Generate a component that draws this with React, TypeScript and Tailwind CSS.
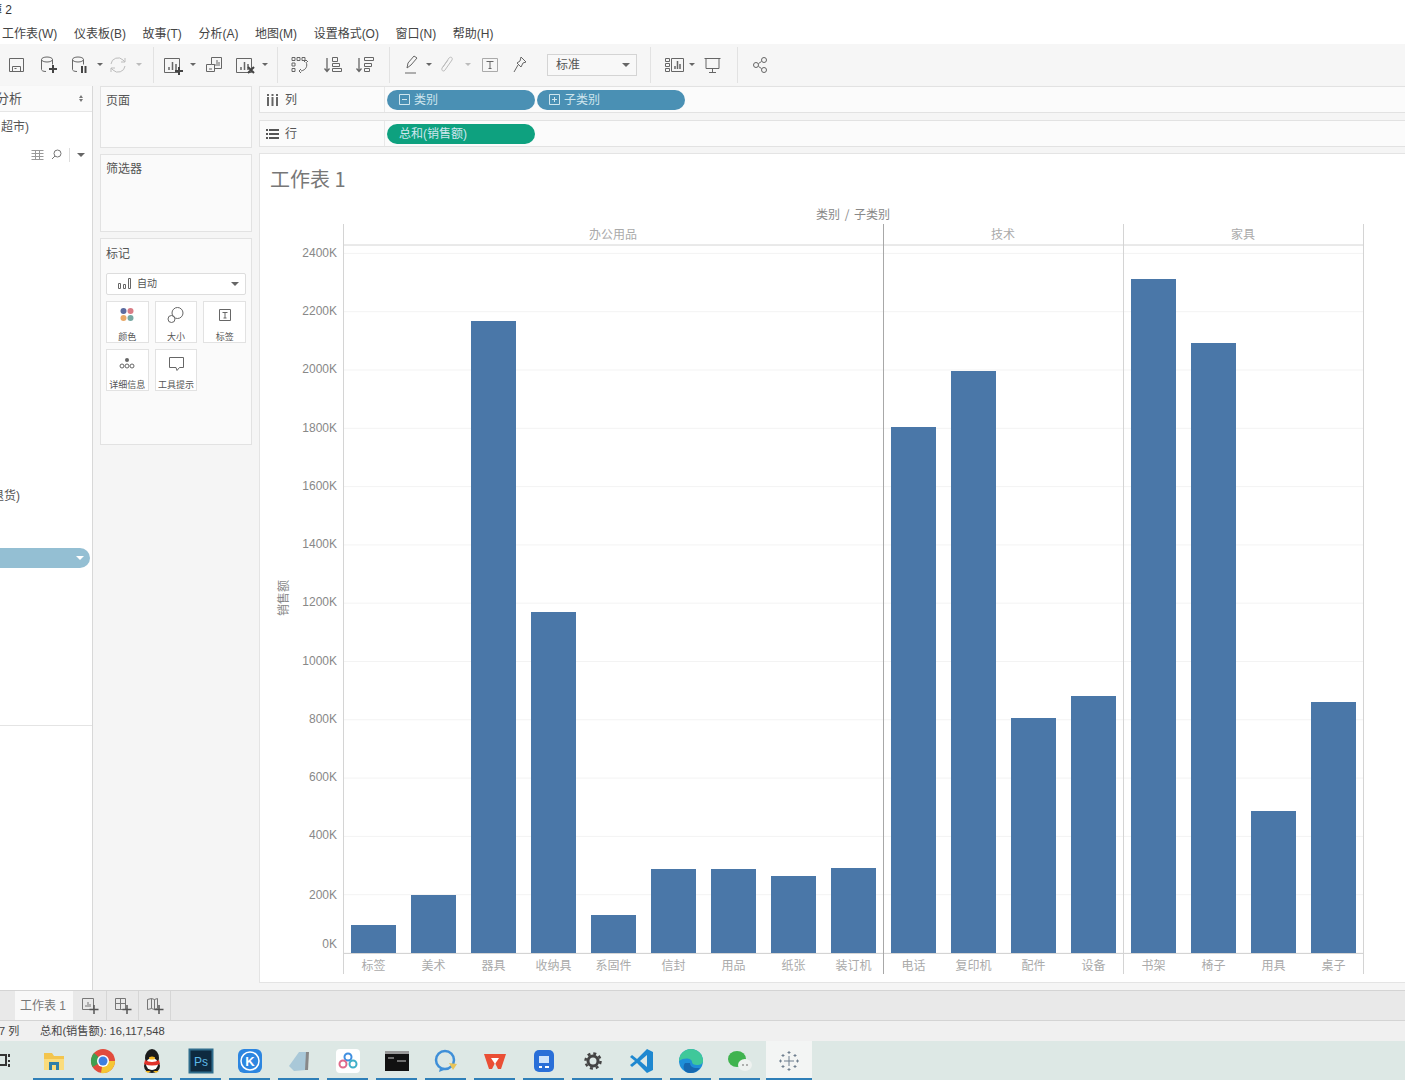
const groups = [
  { name: "办公用品", center: 613 },
  { name: "技术", center: 1003 },
  { name: "家具", center: 1243 },
];

const bars = [
  { name: "标签", x: 351, top: 925 },
  { name: "美术", x: 411, top: 895 },
  { name: "器具", x: 471, top: 321 },
  { name: "收纳具", x: 531, top: 612 },
  { name: "系固件", x: 591, top: 915 },
  { name: "信封", x: 651, top: 869 },
  { name: "用品", x: 711, top: 869 },
  { name: "纸张", x: 771, top: 876 },
  { name: "装订机", x: 831, top: 868 },
  { name: "电话", x: 891, top: 427 },
  { name: "复印机", x: 951, top: 371 },
  { name: "配件", x: 1011, top: 718 },
  { name: "设备", x: 1071, top: 696 },
  { name: "书架", x: 1131, top: 279 },
  { name: "椅子", x: 1191, top: 343 },
  { name: "用具", x: 1251, top: 811 },
  { name: "桌子", x: 1311, top: 702 },
];

const ticks = [
  { label: "2400K", y: 253 },
  { label: "2200K", y: 311 },
  { label: "2000K", y: 369 },
  { label: "1800K", y: 428 },
  { label: "1600K", y: 486 },
  { label: "1400K", y: 544 },
  { label: "1200K", y: 602 },
  { label: "1000K", y: 661 },
  { label: "800K", y: 719 },
  { label: "600K", y: 777 },
  { label: "400K", y: 835 },
  { label: "200K", y: 895 },
  { label: "0K", y: 944 },
];

const menus = [
  "工作表(W)",
  "仪表板(B)",
  "故事(T)",
  "分析(A)",
  "地图(M)",
  "设置格式(O)",
  "窗口(N)",
  "帮助(H)",
];

const Caret = ({ className = "" }: { className?: string }) => (
  <span
    className={`h-0 w-0 border-x-[3px] border-t-[3px] border-x-transparent border-t-[#666] ${className}`}
  />
);

const Sep = ({ className = "" }: { className?: string }) => (
  <span className={`h-[36px] w-px bg-[#e2e2e2] ${className}`} />
);

const Tool = ({
  w = 20,
  children,
  className = "",
}: {
  w?: number;
  children: React.ReactNode;
  className?: string;
}) => (
  <svg
    width={w}
    height="20"
    viewBox={`0 0 ${w} 20`}
    fill="none"
    stroke="#666"
    strokeWidth="1"
    className={`shrink-0 ${className}`}
  >
    {children}
  </svg>
);

const Toolbar = () => (
  <div className="flex h-[41px] items-center bg-[#f6f6f6] text-xs text-[#555]">
    <Tool className="ml-[7px]">
      <path d="M2.5 3.5h14v13h-14zM5.5 16.5v-5h8v5M7.5 13.5h2" />
    </Tool>
    <Tool className="ml-[12px]">
      <ellipse cx="8" cy="4.5" rx="5.5" ry="2.5" />
      <path d="M2.5 4.5v10c0 1 1.5 2 4.5 2M13.5 4.5v5" />
      <path d="M14 10v8M10 14h8" stroke="#444" strokeWidth="2" />
    </Tool>
    <Tool className="ml-[11px]">
      <ellipse cx="8" cy="4.5" rx="5.5" ry="2.5" />
      <path d="M2.5 4.5v10c0 1 1.5 2 4.5 2M13.5 4.5v5" />
      <path d="M12 11v7M15.5 11v7" stroke="#444" strokeWidth="2" />
    </Tool>
    <Caret className="ml-[7px]" />
    <Tool className="ml-[5px] opacity-40">
      <path d="M3 9a7 7 0 0 1 12-4l2 2M17 11a7 7 0 0 1-12 4l-2-2" />
      <path d="M17 3v4h-4M3 17v-4h4" />
    </Tool>
    <Caret className="ml-[8px] opacity-40" />
    <Sep className="ml-[11px]" />
    <Tool className="ml-[8px]" w={22}>
      <path d="M2.5 3.5h15v14h-15z" />
      <path d="M7 15v-3M10.5 15V7M14 15v-6" strokeWidth="1.5" />
      <path d="M17 12v8M13 16h8" stroke="#444" strokeWidth="2" />
    </Tool>
    <Caret className="ml-[6px]" />
    <Tool className="ml-[8px]">
      <path d="M7.5 9.5V2.5h10v11h-7M7.5 9.5h-5v7h8v-7z" />
      <path d="M11 11V9M13 11V5M15 11V7M5 14h3" />
    </Tool>
    <Tool className="ml-[10px]" w={22}>
      <path d="M2.5 3.5h15v14h-15z" />
      <path d="M7 15v-3M10.5 15V7M14 15v-6" strokeWidth="1.5" />
      <path d="M14 12l6 6M20 12l-6 6" stroke="#444" strokeWidth="2" />
    </Tool>
    <Caret className="ml-[6px]" />
    <Sep className="ml-[9px]" />
    <Tool className="ml-[12px]">
      <path d="M2 2.5h3v3H2zM7 2.5h3v3H7zM12 2.5h3v3h-3zM2 8h3v3H2zM2 13.5h3v3H2z" />
      <path d="M16 7c2 4 0 8-5 9M11 14l-2 2 2 2M14 7l2-2 2 2" />
    </Tool>
    <Tool className="ml-[13px]">
      <path d="M4 3v13M1.5 13.5 4 16.5l2.5-3" strokeWidth="1.3" />
      <path d="M9.5 2.5h5v4h-5zM9.5 8.5h7v3h-7zM9.5 13.5h9v3h-9z" />
    </Tool>
    <Tool className="ml-[12px]">
      <path d="M4 3v13M1.5 13.5 4 16.5l2.5-3" strokeWidth="1.3" />
      <path d="M9.5 2.5h9v3h-9zM9.5 8.5h7v3h-7zM9.5 13.5h5v3h-5z" />
    </Tool>
    <Sep className="ml-[14px]" />
    <Tool className="ml-[13px]" w={16}>
      <path d="M4 13 5 8l6-7 3 2-6 7zM2 18h11" />
    </Tool>
    <Caret className="ml-[7px]" />
    <Tool className="ml-[7px] opacity-40" w={16}>
      <path d="M4 12 10 3c2-2 4 0 3 2l-7 10c-1 2-4 1-3-2l6-8" />
    </Tool>
    <Caret className="ml-[10px] opacity-40" />
    <Tool className="ml-[10px]" w={18}>
      <path d="M1.5 3.5h15v13h-15z" stroke="#aaa" />
      <path d="M5.5 6.5h7M9 6.5v7M7.5 13.5h3" />
    </Tool>
    <Tool className="ml-[13px]" w={16}>
      <path d="M9 2l5 5-3 1-2 4-4-4 3-2zM6 10l-4 7" />
    </Tool>
    <div className="ml-[19px] flex h-[22px] w-[90px] items-center justify-between border border-[#d4d4d4] bg-[#f8f8f8] pl-2 pr-[6px]">
      <span>标准</span>
      <Caret className="border-x-[4px] border-t-[4px]" />
    </div>
    <Sep className="ml-[13px]" />
    <Tool className="ml-[13px]" w={21}>
      <path d="M1.5 3.5h4v3h-4zM1.5 8.5h4v3h-4zM1.5 13.5h4v3h-4zM7.5 3.5h12v13h-12z" />
      <path d="M11 14v-3M13.5 14V6M16 14V9" strokeWidth="1.5" />
    </Tool>
    <Caret className="ml-[4px]" />
    <Tool className="ml-[8px]">
      <path d="M1.5 3.5h16M3 3.5v10h13v-10M9.5 13.5v4M6 17.5h7" />
    </Tool>
    <Sep className="ml-[14px]" />
    <Tool className="ml-[14px]" w={18}>
      <circle cx="4" cy="10" r="2.5" />
      <circle cx="12" cy="5" r="2.5" />
      <circle cx="12" cy="15" r="2.5" />
      <path d="M6.5 8.5 9.5 6.5M6.5 11.5l3 2" />
    </Tool>
  </div>
);

const Sidebar = () => (
  <aside className="flex w-[93px] shrink-0 flex-col border-r border-[#d8d8d8] bg-white text-xs text-[#555]">
    <div className="flex h-[26px] items-center justify-between border-b border-[#e6e6e6] bg-[#fafafa] pr-[9px]">
      <span className="-ml-[4px] text-[13px]">分析</span>
      <span className="flex flex-col gap-px">
        <span className="h-0 w-0 border-x-[2px] border-b-[3px] border-x-transparent border-b-[#777]" />
        <span className="h-0 w-0 border-x-[2px] border-t-[3px] border-x-transparent border-t-[#777]" />
      </span>
    </div>
    <div className="flex h-[29px] items-center">
      <span className="ml-px">超市)</span>
    </div>
    <div className="flex h-[27px] items-center justify-end gap-[7px] pr-[7px]">
      <svg width="13" height="11" viewBox="0 0 13 11" stroke="#999" fill="none">
        <path d="M.5 1.5h12M.5 4.5h12M.5 7.5h12M.5 10.5h12M4.5 1v10M8.5 1v10" />
      </svg>
      <svg width="11" height="11" viewBox="0 0 11 11" stroke="#777" fill="none">
        <circle cx="6.5" cy="4.5" r="3.5" />
        <path d="M4 7 1 10" />
      </svg>
      <span className="h-[14px] w-px bg-[#ddd]" />
      <Caret className="border-x-[4px] border-t-[4px]" />
    </div>
    <div className="mt-[320px] h-[17px] leading-[17px]">
      <span className="-ml-[8px] inline-block">退货)</span>
    </div>
    <div className="mt-[43px] flex h-[20px] w-[90px] items-center justify-end rounded-r-full bg-[#94bfd3] pr-[6px]">
      <Caret className="border-x-[4px] border-t-[4px] border-t-white" />
    </div>
    <div className="mt-[157px] h-px bg-[#e4e4e4]" />
  </aside>
);

const MarkButton = ({
  label,
  children,
}: {
  label: string;
  children: React.ReactNode;
}) => (
  <div className="flex h-[42px] flex-col items-center justify-between border border-[#e2e2e2] bg-white pb-0 pt-[4px] text-[9px] leading-none text-[#555]">
    <svg width="20" height="20" viewBox="0 0 20 20" fill="none" stroke="#666">
      {children}
    </svg>
    <span className="whitespace-nowrap">{label}</span>
  </div>
);

const Cards = () => (
  <div className="flex w-[166px] shrink-0 flex-col gap-[6px] pl-[7px] pr-[7px] text-xs text-[#555]">
    <section className="h-[62px] border border-[#e2e2e2] bg-[#fafafa] pl-[5px] pt-[6px]">
      页面
    </section>
    <section className="h-[78px] border border-[#e2e2e2] bg-[#fafafa] pl-[5px] pt-[6px]">
      筛选器
    </section>
    <section className="flex h-[207px] flex-col border border-[#e2e2e2] bg-[#fafafa] px-[5px] pt-[7px]">
      <span>标记</span>
      <div className="mt-[11px] flex h-[22px] items-center justify-between rounded-[2px] border border-[#ddd] bg-white pl-[10px] pr-[6px] text-[10px]">
        <span className="flex items-center gap-[6px]">
          <svg width="14" height="11" viewBox="0 0 14 11" fill="none" stroke="#666">
            <path d="M1.5 5.5h2v5h-2zM6.5 6.5h2v4h-2zM11.5 .5h2v10h-2z" />
          </svg>
          自动
        </span>
        <Caret className="border-x-[4px] border-t-[4px]" />
      </div>
      <div className="mt-[6px] grid grid-cols-3 gap-[6px]">
        <MarkButton label="颜色">
          <circle cx="6.5" cy="5" r="3" fill="#5b6ca0" stroke="none" />
          <circle cx="13.5" cy="5" r="3" fill="#d97c85" stroke="none" />
          <circle cx="6.5" cy="12" r="3" fill="#e8a868" stroke="none" />
          <circle cx="13.5" cy="12" r="3" fill="#76a8a2" stroke="none" />
        </MarkButton>
        <MarkButton label="大小">
          <circle cx="11.5" cy="7" r="5.5" />
          <circle cx="5.5" cy="13" r="3.5" />
        </MarkButton>
        <MarkButton label="标签">
          <path d="M4.5 3.5h11v11h-11z" />
          <path d="M7.5 6.5h5M10 6.5v5.5M8.5 12h3" />
        </MarkButton>
        <MarkButton label="详细信息">
          <circle cx="10" cy="6" r="2" fill="#666" stroke="none" />
          <circle cx="5" cy="12" r="2" />
          <circle cx="10" cy="12" r="2" />
          <circle cx="15" cy="12" r="2" />
        </MarkButton>
        <MarkButton label="工具提示">
          <path d="M3.5 3.5h14v10h-4l-2.5 3-1-3h-6.5z" />
        </MarkButton>
      </div>
    </section>
  </div>
);

const Pill = ({
  label,
  color,
  box,
}: {
  label: string;
  color: string;
  box?: "minus" | "plus";
}) => (
  <span
    className={`flex h-[20px] w-[148px] items-center gap-[4px] rounded-full pl-[12px] text-xs text-[#cfe6ee] ${color}`}
  >
    {box && (
      <svg width="11" height="11" viewBox="0 0 11 11" fill="none" stroke="#cfe6ee">
        <path d={box === "minus" ? "M.5 .5h10v10H.5zM3 5.5h5" : "M.5 .5h10v10H.5zM3 5.5h5M5.5 3v5"} />
      </svg>
    )}
    {label}
  </span>
);

const Shelf = ({
  label,
  icon,
  children,
  className = "",
}: {
  label: string;
  icon: React.ReactNode;
  children: React.ReactNode;
  className?: string;
}) => (
  <div className={`flex h-[27px] border border-r-0 border-[#e2e2e2] bg-[#fbfbfb] ${className}`}>
    <div className="flex w-[125px] shrink-0 items-center gap-[6px] border-r border-[#e8e8e8] pl-[6px] text-xs text-[#555]">
      {icon}
      {label}
    </div>
    <div className="flex items-center gap-[2px] pl-[2px]">{children}</div>
  </div>
);

const Chart = () => (
  <svg
    width="1146"
    height="828"
    viewBox="260 154 1146 828"
    className="block"
    fontFamily="'Noto Sans CJK SC', sans-serif"
  >
    {ticks.map((tick, i) => (
      <line
        key={tick.label}
        x1="344"
        x2="1363"
        y1={953 - (12 - i) * 58.3}
        y2={953 - (12 - i) * 58.3}
        stroke="#f3f3f3"
      />
    ))}
    {bars.map((bar) => (
      <rect
        key={bar.name}
        x={bar.x}
        y={bar.top}
        width="45"
        height={953 - bar.top}
        fill="#4a77a8"
      />
    ))}
    <path d="M343.5 224v750M1123.5 224v750M1363.5 224v750M343 245h1021M343 953.5h1021" stroke="#d4d4d4" fill="none" />
    <path d="M883.500 224v750" stroke="#a8a8a8" />
    <text x="853" y="219" textAnchor="middle" fontSize="12" fill="#888" wordSpacing="2">
      类别 / 子类别
    </text>
    {groups.map((group) => (
      <text key={group.name} x={group.center} y="239" textAnchor="middle" fontSize="12" fill="#aaa">
        {group.name}
      </text>
    ))}
    {ticks.map((tick) => (
      <text key={tick.label} x="337" y={tick.y + 4} textAnchor="end" fontSize="12" fill="#888" fontFamily="'Liberation Sans', sans-serif">
        {tick.label}
      </text>
    ))}
    {bars.map((bar) => (
      <text key={bar.name} x={bar.x + 22.5} y="970" textAnchor="middle" fontSize="12" fill="#aaa">
        {bar.name}
      </text>
    ))}
    <text
      transform="translate(288 598) rotate(-90)"
      textAnchor="middle"
      fontSize="12"
      fill="#888"
    >
      销售额
    </text>
  </svg>
);

const SheetAdd = ({ d }: { d: string }) => (
  <svg width="18" height="18" viewBox="0 0 18 18" fill="none" stroke="#777">
    <path d={d} />
    <path d="M13 8v9M8.5 12.5h9" stroke="#555" strokeWidth="1.5" />
  </svg>
);

const TabBar = () => (
  <div className="flex h-[31px] border-y border-[#d4d4d4] bg-[#e9e9e9] text-xs">
    <div className="ml-[15px] flex w-[58px] items-center bg-[#f8f8f8] pl-[5px] text-[#777]">
      工作表 1
    </div>
    <div className="flex w-[34px] items-center justify-center border-r border-[#d6d6d6]">
      <SheetAdd d="M1.5 1.5h11v11h-11zM5 10V8M7 10V5M9 10V7" />
    </div>
    <div className="flex w-[32px] items-center justify-center border-r border-[#d6d6d6]">
      <SheetAdd d="M1.5 1.5h10v11h-10zM1.5 6.5h10M6.5 1.5v11" />
    </div>
    <div className="flex w-[32px] items-center justify-center border-r border-[#d6d6d6]">
      <SheetAdd d="M1.5 2.5l4-1 3 1 3-1v10l-3 1-3-1-4 1zM5.5 1.5v10M8.5 2.5v10" />
    </div>
  </div>
);

const StatusBar = () => (
  <div className="flex h-[20px] items-center bg-[#f0f0f0] text-[11px] text-[#444]">
    <span className="-ml-px w-[41px] shrink-0">7 列</span>
    <span className="text-[11.2px]">总和(销售额): 16,117,548</span>
  </div>
);

const slots = [33, 82, 131, 180, 229, 278, 327, 376, 425, 474, 523, 572, 621, 670, 719];

const TaskIcon = ({ children }: { children: React.ReactNode }) => (
  <span className="flex w-[49px] justify-center">
    <svg width="26" height="26" viewBox="0 0 26 26">
      {children}
    </svg>
  </span>
);

const Taskbar = () => (
  <div className="relative flex h-[39px] items-center bg-[#dde8e5] pl-[29px]">
    <span className="absolute left-0 top-[12px] text-[15px] leading-none text-[#333]">
      <svg width="11" height="15" viewBox="0 0 11 15" fill="none" stroke="#333" strokeWidth="2">
        <path d="M0 2h6v10H0M9 1v3M9 7v2M9 11v3" />
      </svg>
    </span>
    <TaskIcon>
      <path d="M3 5h8l2 3h10v14H3z" fill="#f3c54e" />
      <path d="M3 11h20v11H3z" fill="#fbdc7c" />
      <path d="M8 14h10v8h-3v-5h-4v5H8z" fill="#2f7fa8" />
    </TaskIcon>
    <TaskIcon>
      <circle cx="13" cy="13" r="12" fill="#e24b3c" />
      <path d="M13 13 2.5 19A12 12 0 0 1 4 5z" fill="#3f9f50" />
      <path d="M13 13h12a12 12 0 0 1-14 12z" fill="#f5c635" />
      <circle cx="13" cy="13" r="6" fill="#fff" />
      <circle cx="13" cy="13" r="4.5" fill="#3f7fe0" />
    </TaskIcon>
    <TaskIcon>
      <ellipse cx="13" cy="10" rx="7" ry="9" fill="#1c1c1c" />
      <ellipse cx="13" cy="18" rx="8" ry="7" fill="#1c1c1c" />
      <ellipse cx="13" cy="16" rx="6" ry="6" fill="#fff" />
      <path d="M6 12q7 4 14 0l1 4q-8 3-16 0z" fill="#e0322a" />
      <ellipse cx="13" cy="10" rx="3" ry="1.5" fill="#f5b820" />
      <path d="M6 23h6l-3 2zM14 23h6l-3 2z" fill="#f5b820" />
    </TaskIcon>
    <TaskIcon>
      <rect x="1.5" y="1.5" width="23" height="23" fill="#0e2a40" stroke="#2f6c8c" strokeWidth="2" />
      <text x="13" y="18" textAnchor="middle" fontSize="12" fill="#5db8e8" fontFamily="'Liberation Sans', sans-serif">
        Ps
      </text>
    </TaskIcon>
    <TaskIcon>
      <rect x="1" y="1" width="24" height="24" rx="6" fill="#2d86e0" />
      <circle cx="13" cy="13" r="9" fill="none" stroke="#fff" strokeWidth="1.5" />
      <text x="13" y="18" textAnchor="middle" fontSize="13" fontWeight="bold" fill="#fff" fontFamily="'Liberation Sans', sans-serif">
        K
      </text>
    </TaskIcon>
    <TaskIcon>
      <path d="M3 18 13 4l9 0-2 18-12 1z" fill="#a9c8d8" />
      <path d="M20 4h3l-1 18h-3z" fill="#888" />
    </TaskIcon>
    <TaskIcon>
      <rect x="1" y="1" width="24" height="24" rx="4" fill="#fff" />
      <circle cx="13" cy="9" r="3.5" fill="none" stroke="#3f8fe0" strokeWidth="2" />
      <circle cx="8" cy="16" r="3.5" fill="none" stroke="#e06a8a" strokeWidth="2" />
      <circle cx="18" cy="16" r="3.5" fill="none" stroke="#3fb0c8" strokeWidth="2" />
    </TaskIcon>
    <TaskIcon>
      <rect x="1" y="3" width="24" height="20" fill="#111" />
      <rect x="1" y="3" width="24" height="3" fill="#999" />
      <path d="M4 10h6M13 13h9" stroke="#ccc" />
    </TaskIcon>
    <TaskIcon>
      <circle cx="12" cy="12" r="9" fill="none" stroke="#3f8fd8" strokeWidth="2.5" />
      <path d="M16 15l8 1-4 6z" fill="#e8c45a" />
      <path d="M7 20l-1 4 5-2z" fill="#3f8fd8" />
    </TaskIcon>
    <TaskIcon>
      <path d="M2 6h22l-5 15h-3l-3-6-3 6H7z" fill="#ea4f35" />
      <path d="M9 10h8l-4 6z" fill="#fff" />
    </TaskIcon>
    <TaskIcon>
      <rect x="3" y="2" width="20" height="22" rx="5" fill="#2a6fd8" />
      <rect x="8" y="8" width="10" height="7" fill="#cfe3fa" />
      <path d="M8 19h3M14 19h4" stroke="#fff" strokeWidth="2" />
    </TaskIcon>
    <TaskIcon>
      <circle cx="13" cy="13" r="5" fill="none" stroke="#444" strokeWidth="3" />
      <circle cx="13" cy="13" r="7.5" fill="none" stroke="#444" strokeWidth="2.5" strokeDasharray="3 2.9" />
    </TaskIcon>
    <TaskIcon>
      <path d="M18 1 24 4v18l-6 3L8 15l-5 4-2-2 5-4-5-4 2-2 5 4z" fill="#1f88d0" />
      <path d="M18 7v12l-7-6z" fill="#dde8e5" />
    </TaskIcon>
    <TaskIcon>
      <circle cx="13" cy="13" r="12" fill="#1f8fd8" />
      <path d="M1 13a12 12 0 0 1 24 0c0 3-3 4-6 4-3 0-5-1-5-3 0-4-8-5-13-1z" fill="#3fc89a" />
      <path d="M12 15a5 5 0 0 0 5 5h5a12 12 0 0 1-10 5c-6 0-8-6-5-10z" fill="#1668b0" />
    </TaskIcon>
    <TaskIcon>
      <ellipse cx="10" cy="11" rx="9" ry="8" fill="#3fb34f" />
      <ellipse cx="18" cy="17" rx="7" ry="6" fill="#eef2f0" />
      <circle cx="16" cy="17" r="1" fill="#999" />
      <circle cx="20" cy="17" r="1" fill="#999" />
    </TaskIcon>
    <span className="ml-[2px] flex h-[39px] w-[46px] items-center justify-center bg-[#f3f5f4]">
      <svg width="22" height="22" viewBox="0 0 22 22" fill="none" stroke="#6f7f8f">
        <path d="M11 6v10M6 11h10M11 1v3M9.5 2.5h3M11 18v3M9.5 19.5h3M1 11h3M2.5 9.5v3M18 11h3M19.5 9.5v3M5 4v3M3.5 5.5h3M17 4v3M15.5 5.5h3M5 15v3M3.5 16.5h3M17 15v3M15.5 16.5h3" />
      </svg>
    </span>
    {slots.map((left) => (
      <span
        key={left}
        className="absolute bottom-0 h-[2px] w-[41px] bg-[#2f7fb8]"
        style={{ left }}
      />
    ))}
    <span className="absolute bottom-0 left-[766px] h-[2px] w-[46px] bg-[#2f7fb8]" />
  </div>
);

export default function App() {
  return (
    <div className="flex h-[1080px] w-[1405px] flex-col overflow-hidden bg-white font-['Liberation_Sans','Noto_Sans_CJK_SC',sans-serif]">
      <div className="flex h-[20px] items-center overflow-hidden text-xs text-[#333]">
        <span className="-ml-[10px]">簿 2</span>
      </div>
      <nav className="flex h-[24px] items-center gap-[16.6px] pl-[2px] pt-[3px] text-xs text-[#444]">
        {menus.map((menu) => (
          <span key={menu}>{menu}</span>
        ))}
      </nav>
      <Toolbar />
      <main className="flex h-[905px] overflow-hidden bg-[#f5f5f5] pt-px">
        <Sidebar />
        <Cards />
        <div className="flex min-w-0 flex-1 flex-col">
          <Shelf
            label="列"
            icon={
              <svg width="13" height="12" viewBox="0 0 13 12" fill="#666">
                <path d="M1 3h2v9H1zM5.5 3h2v9h-2zM10 3h2v9h-2zM1 0h2v2H1zM5.5 0h2v2h-2zM10 0h2v2h-2z" />
              </svg>
            }
          >
            <Pill label="类别" color="bg-[#4a90b4]" box="minus" />
            <Pill label="子类别" color="bg-[#4a90b4]" box="plus" />
          </Shelf>
          <Shelf
            label="行"
            className="mt-[7px]"
            icon={
              <svg width="13" height="12" viewBox="0 0 13 12" fill="#555">
                <path d="M0 1h2v2H0zM0 5h2v2H0zM0 9h2v2H0zM3 1h10v2H3zM3 5h10v2H3zM3 9h10v2H3z" />
              </svg>
            }
          >
            <Pill label="总和(销售额)" color="bg-[#0ea17f] text-[#bfeadd]" />
          </Shelf>
          <div className="mt-[6px] border border-r-0 border-[#e4e4e4] bg-white">
            <div className="relative h-0">
              <span className="absolute left-[10px] top-[11px] font-['Noto_Sans_CJK_SC',sans-serif] text-xl leading-[28px] text-[#777]">
                工作表 1
              </span>
            </div>
            <Chart />
          </div>
        </div>
      </main>
      <TabBar />
      <StatusBar />
      <Taskbar />
    </div>
  );
}
